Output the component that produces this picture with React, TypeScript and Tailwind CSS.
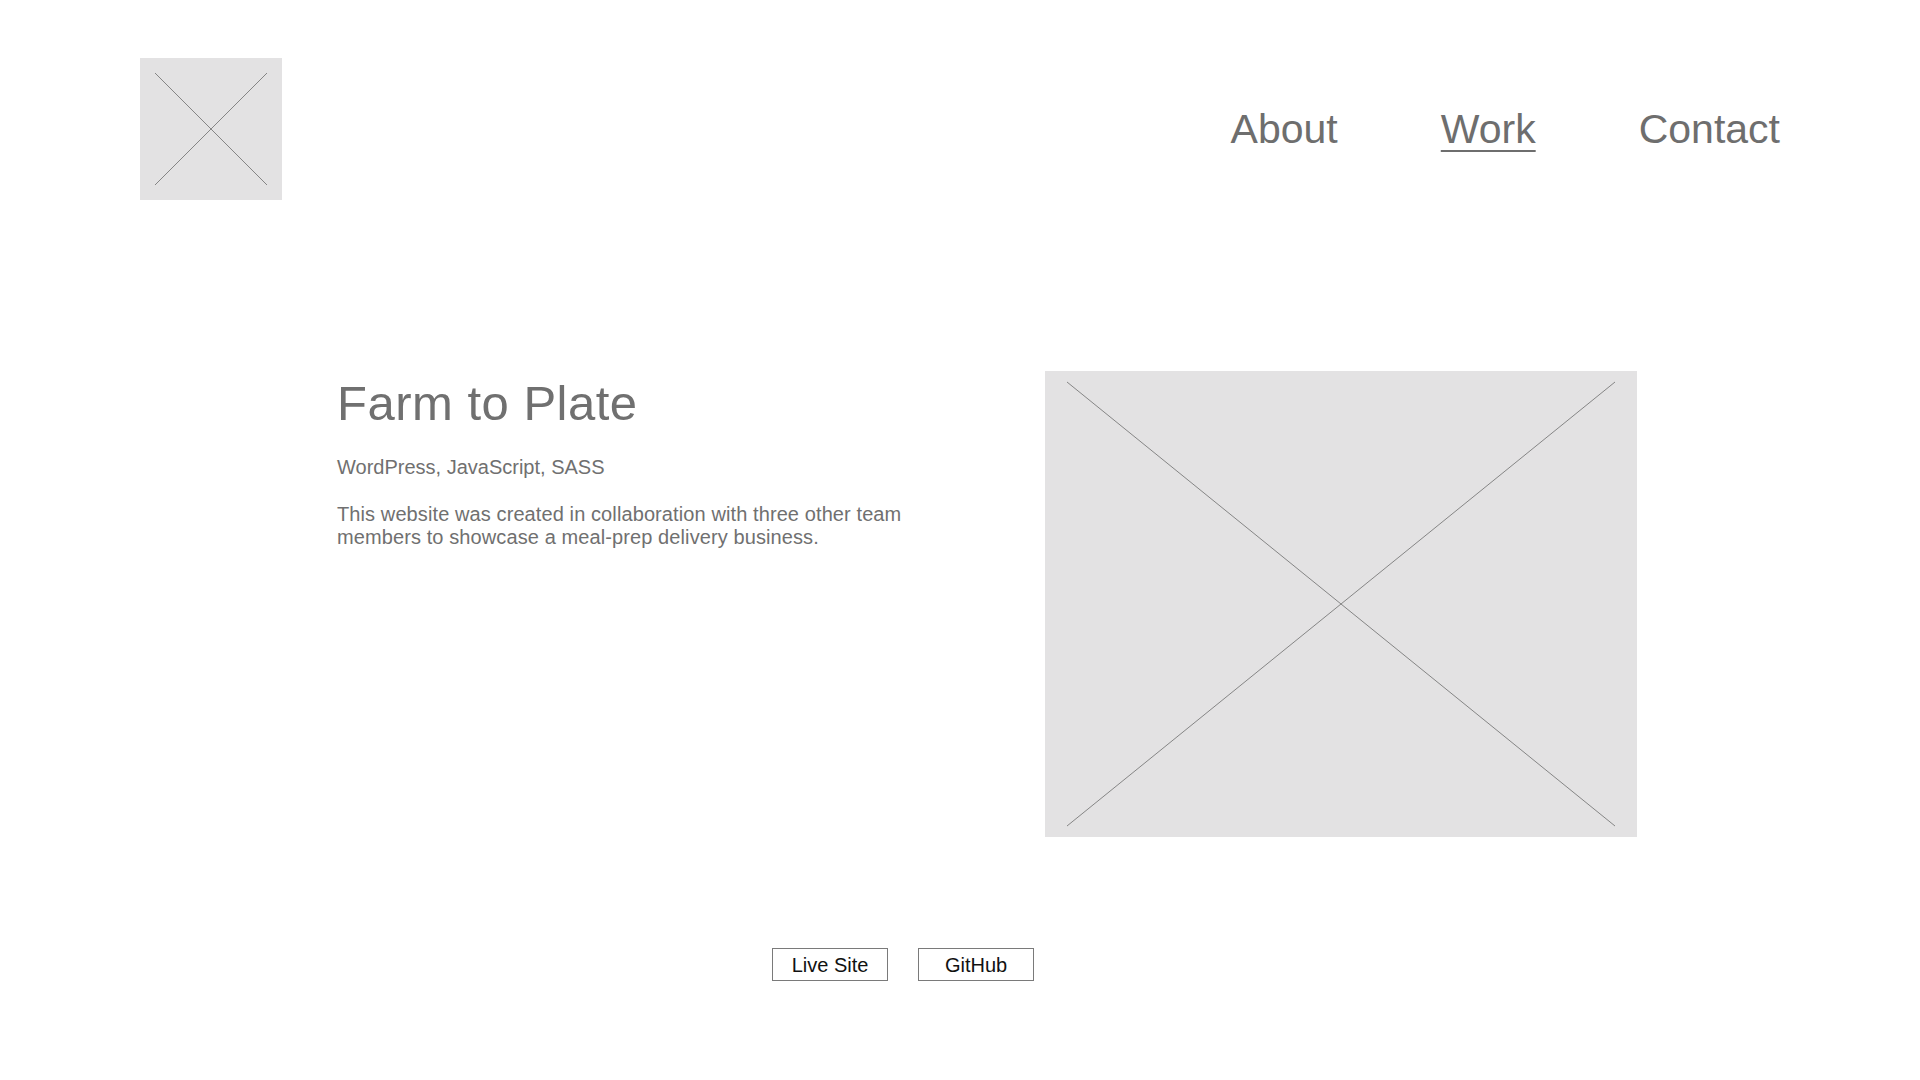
const NAV = [
  { label: 'About', active: false },
  { label: 'Work', active: true },
  { label: 'Contact', active: false },
];

// grey placeholder box with a cross through it, like a wireframe image slot
function Placeholder({ w, h, ix, iy }: { w: number; h: number; ix: number; iy: number }) {
  return (
    <svg width={w} height={h} viewBox={`0 0 ${w} ${h}`} className="block shrink-0">
      <rect x="0" y="0" width={w} height={h} fill="#e3e2e3" />
      <line x1={ix} y1={iy} x2={w - ix} y2={h - iy} stroke="#858585" strokeWidth="1" />
      <line x1={w - ix} y1={iy} x2={ix} y2={h - iy} stroke="#858585" strokeWidth="1" />
    </svg>
  );
}

export default function App() {
  return (
    <div
      className="min-h-screen w-full bg-white text-[#707070]"
      style={{ fontFamily: '"Liberation Sans", Arial, Helvetica, sans-serif' }}
    >
      {/* Header */}
      <header className="flex items-center justify-between pl-[140px] pr-[140px] pt-[58px]">
        <Placeholder w={142} h={142} ix={15} iy={15} />
        <nav className="flex items-center gap-[103px]">
          {NAV.map(item => (
            <a
              key={item.label}
              href="#"
              className={
                item.active
                  ? 'text-[41px] leading-[48px] text-[#6e6e6e] underline decoration-2 underline-offset-[7px]'
                  : 'text-[41px] leading-[48px] text-[#6e6e6e]'
              }
            >
              {item.label}
            </a>
          ))}
        </nav>
      </header>

      {/* Project */}
      <main className="pl-[337px] pr-[283px] pt-[171px]">
        <div className="flex items-start justify-between">
          <div className="w-[580px]">
            <h1 className="mt-[4px] text-[49px] leading-[56px] tracking-[0.5px]">Farm to Plate</h1>
            <p className="mt-[24px] text-[20px] leading-[24px]">WordPress, JavaScript, SASS</p>
            <p className="mt-[24px] text-[20px] leading-[23px] tracking-[0.1px]">
              This website was created in collaboration with three other team members to showcase a meal-prep delivery business.
            </p>
          </div>
          <Placeholder w={592} h={466} ix={22} iy={11} />
        </div>

        <div className="ml-[435px] mt-[111px] flex gap-[30px]">
          <button className="w-[116px] h-[33px] border border-[#7a7a7a] text-[20px] leading-none text-[#111]">
            Live Site
          </button>
          <button className="w-[116px] h-[33px] border border-[#7a7a7a] text-[20px] leading-none text-[#111]">
            GitHub
          </button>
        </div>
      </main>
    </div>
  );
}
